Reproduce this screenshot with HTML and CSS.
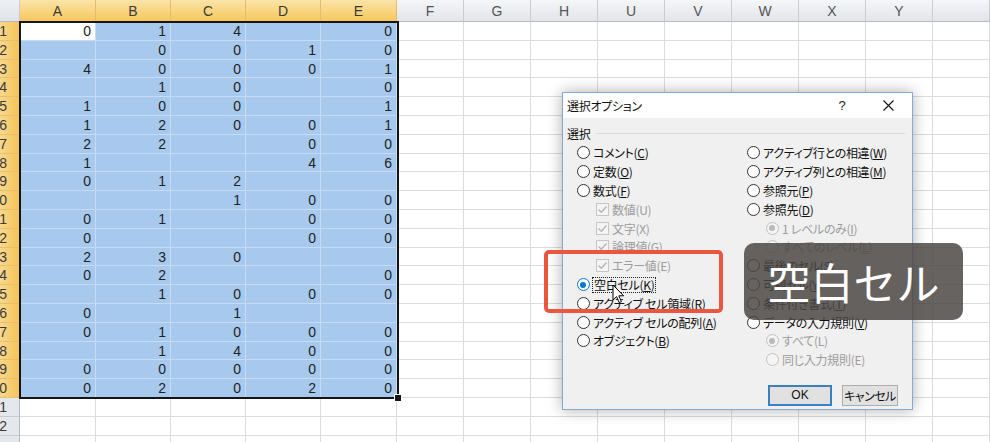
FILE: index.html
```html
<!DOCTYPE html>
<html lang="ja">
<head>
<meta charset="utf-8">
<title>選択オプション</title>
<link rel="stylesheet" href="styles.css">
</head>
<body>
<div class="sheet">
  <div class="row hdr"><div class="corner"></div><div class="sel">A</div><div class="sel">B</div><div class="sel">C</div><div class="sel">D</div><div class="sel">E</div><div>F</div><div>G</div><div>H</div><div>U</div><div>V</div><div>W</div><div>X</div><div>Y</div><div></div></div>
  <div class="row"><div class="rh sel"><span>1</span></div><div class="c act">0</div><div class="c s">1</div><div class="c s">4</div><div class="c s"></div><div class="c s">0</div><div class="c"></div><div class="c"></div><div class="c"></div><div class="c"></div><div class="c"></div><div class="c"></div><div class="c"></div><div class="c"></div><div class="c"></div></div>
  <div class="row"><div class="rh sel"><span>2</span></div><div class="c s"></div><div class="c s">0</div><div class="c s">0</div><div class="c s">1</div><div class="c s">0</div><div class="c"></div><div class="c"></div><div class="c"></div><div class="c"></div><div class="c"></div><div class="c"></div><div class="c"></div><div class="c"></div><div class="c"></div></div>
  <div class="row"><div class="rh sel"><span>3</span></div><div class="c s">4</div><div class="c s">0</div><div class="c s">0</div><div class="c s">0</div><div class="c s">1</div><div class="c"></div><div class="c"></div><div class="c"></div><div class="c"></div><div class="c"></div><div class="c"></div><div class="c"></div><div class="c"></div><div class="c"></div></div>
  <div class="row"><div class="rh sel"><span>4</span></div><div class="c s"></div><div class="c s">1</div><div class="c s">0</div><div class="c s"></div><div class="c s">0</div><div class="c"></div><div class="c"></div><div class="c"></div><div class="c"></div><div class="c"></div><div class="c"></div><div class="c"></div><div class="c"></div><div class="c"></div></div>
  <div class="row"><div class="rh sel"><span>5</span></div><div class="c s">1</div><div class="c s">0</div><div class="c s">0</div><div class="c s"></div><div class="c s">1</div><div class="c"></div><div class="c"></div><div class="c"></div><div class="c"></div><div class="c"></div><div class="c"></div><div class="c"></div><div class="c"></div><div class="c"></div></div>
  <div class="row"><div class="rh sel"><span>6</span></div><div class="c s">1</div><div class="c s">2</div><div class="c s">0</div><div class="c s">0</div><div class="c s">1</div><div class="c"></div><div class="c"></div><div class="c"></div><div class="c"></div><div class="c"></div><div class="c"></div><div class="c"></div><div class="c"></div><div class="c"></div></div>
  <div class="row"><div class="rh sel"><span>7</span></div><div class="c s">2</div><div class="c s">2</div><div class="c s"></div><div class="c s">0</div><div class="c s">0</div><div class="c"></div><div class="c"></div><div class="c"></div><div class="c"></div><div class="c"></div><div class="c"></div><div class="c"></div><div class="c"></div><div class="c"></div></div>
  <div class="row"><div class="rh sel"><span>8</span></div><div class="c s">1</div><div class="c s"></div><div class="c s"></div><div class="c s">4</div><div class="c s">6</div><div class="c"></div><div class="c"></div><div class="c"></div><div class="c"></div><div class="c"></div><div class="c"></div><div class="c"></div><div class="c"></div><div class="c"></div></div>
  <div class="row"><div class="rh sel"><span>9</span></div><div class="c s">0</div><div class="c s">1</div><div class="c s">2</div><div class="c s"></div><div class="c s"></div><div class="c"></div><div class="c"></div><div class="c"></div><div class="c"></div><div class="c"></div><div class="c"></div><div class="c"></div><div class="c"></div><div class="c"></div></div>
  <div class="row"><div class="rh sel"><span>10</span></div><div class="c s"></div><div class="c s"></div><div class="c s">1</div><div class="c s">0</div><div class="c s">0</div><div class="c"></div><div class="c"></div><div class="c"></div><div class="c"></div><div class="c"></div><div class="c"></div><div class="c"></div><div class="c"></div><div class="c"></div></div>
  <div class="row"><div class="rh sel"><span>11</span></div><div class="c s">0</div><div class="c s">1</div><div class="c s"></div><div class="c s">0</div><div class="c s">0</div><div class="c"></div><div class="c"></div><div class="c"></div><div class="c"></div><div class="c"></div><div class="c"></div><div class="c"></div><div class="c"></div><div class="c"></div></div>
  <div class="row"><div class="rh sel"><span>12</span></div><div class="c s">0</div><div class="c s"></div><div class="c s"></div><div class="c s">0</div><div class="c s">0</div><div class="c"></div><div class="c"></div><div class="c"></div><div class="c"></div><div class="c"></div><div class="c"></div><div class="c"></div><div class="c"></div><div class="c"></div></div>
  <div class="row"><div class="rh sel"><span>13</span></div><div class="c s">2</div><div class="c s">3</div><div class="c s">0</div><div class="c s"></div><div class="c s"></div><div class="c"></div><div class="c"></div><div class="c"></div><div class="c"></div><div class="c"></div><div class="c"></div><div class="c"></div><div class="c"></div><div class="c"></div></div>
  <div class="row"><div class="rh sel"><span>14</span></div><div class="c s">0</div><div class="c s">2</div><div class="c s"></div><div class="c s"></div><div class="c s">0</div><div class="c"></div><div class="c"></div><div class="c"></div><div class="c"></div><div class="c"></div><div class="c"></div><div class="c"></div><div class="c"></div><div class="c"></div></div>
  <div class="row"><div class="rh sel"><span>15</span></div><div class="c s"></div><div class="c s">1</div><div class="c s">0</div><div class="c s">0</div><div class="c s">0</div><div class="c"></div><div class="c"></div><div class="c"></div><div class="c"></div><div class="c"></div><div class="c"></div><div class="c"></div><div class="c"></div><div class="c"></div></div>
  <div class="row"><div class="rh sel"><span>16</span></div><div class="c s">0</div><div class="c s"></div><div class="c s">1</div><div class="c s"></div><div class="c s"></div><div class="c"></div><div class="c"></div><div class="c"></div><div class="c"></div><div class="c"></div><div class="c"></div><div class="c"></div><div class="c"></div><div class="c"></div></div>
  <div class="row"><div class="rh sel"><span>17</span></div><div class="c s">0</div><div class="c s">1</div><div class="c s">0</div><div class="c s">0</div><div class="c s">0</div><div class="c"></div><div class="c"></div><div class="c"></div><div class="c"></div><div class="c"></div><div class="c"></div><div class="c"></div><div class="c"></div><div class="c"></div></div>
  <div class="row"><div class="rh sel"><span>18</span></div><div class="c s"></div><div class="c s">1</div><div class="c s">4</div><div class="c s">0</div><div class="c s">0</div><div class="c"></div><div class="c"></div><div class="c"></div><div class="c"></div><div class="c"></div><div class="c"></div><div class="c"></div><div class="c"></div><div class="c"></div></div>
  <div class="row"><div class="rh sel"><span>19</span></div><div class="c s">0</div><div class="c s">0</div><div class="c s">0</div><div class="c s">0</div><div class="c s">0</div><div class="c"></div><div class="c"></div><div class="c"></div><div class="c"></div><div class="c"></div><div class="c"></div><div class="c"></div><div class="c"></div><div class="c"></div></div>
  <div class="row"><div class="rh sel"><span>20</span></div><div class="c s">0</div><div class="c s">2</div><div class="c s">0</div><div class="c s">2</div><div class="c s">0</div><div class="c"></div><div class="c"></div><div class="c"></div><div class="c"></div><div class="c"></div><div class="c"></div><div class="c"></div><div class="c"></div><div class="c"></div></div>
  <div class="row"><div class="rh"><span>21</span></div><div class="c"></div><div class="c"></div><div class="c"></div><div class="c"></div><div class="c"></div><div class="c"></div><div class="c"></div><div class="c"></div><div class="c"></div><div class="c"></div><div class="c"></div><div class="c"></div><div class="c"></div><div class="c"></div></div>
  <div class="row"><div class="rh"><span>22</span></div><div class="c"></div><div class="c"></div><div class="c"></div><div class="c"></div><div class="c"></div><div class="c"></div><div class="c"></div><div class="c"></div><div class="c"></div><div class="c"></div><div class="c"></div><div class="c"></div><div class="c"></div><div class="c"></div></div>
  <div class="row"><div class="rh"></div><div class="c"></div><div class="c"></div><div class="c"></div><div class="c"></div><div class="c"></div><div class="c"></div><div class="c"></div><div class="c"></div><div class="c"></div><div class="c"></div><div class="c"></div><div class="c"></div><div class="c"></div><div class="c"></div></div>
  <div class="frame"><span class="handle"></span></div>
</div>

<div class="dialog">
  <div class="titlebar">
    <span class="title">選択オプション</span>
    <span class="tbtn help">?</span>
    <span class="tbtn close"><svg width="11" height="11" viewBox="0 0 11 11"><path d="M0.5 0.5 L10.5 10.5 M10.5 0.5 L0.5 10.5" stroke="#111" stroke-width="1.1" fill="none"/></svg></span>
  </div>
  <div class="body">
    <div class="group"><span>選択</span><span class="rule"></span></div>
    <div class="cols">
      <div class="col left">
        <div class="opt"><span class="radio"></span>コメント(<u>C</u>)</div>
        <div class="opt"><span class="radio"></span>定数(<u>O</u>)</div>
        <div class="opt"><span class="radio"></span>数式(<u>F</u>)</div>
        <div class="opt ind dis"><span class="check"><svg width="11" height="11" viewBox="0 0 11 11"><path d="M1.5 5.5 L4.3 8.3 L9.5 2.5" stroke="#b4b4b4" stroke-width="1.3" fill="none"/></svg></span>数値(U)</div>
        <div class="opt ind dis"><span class="check"><svg width="11" height="11" viewBox="0 0 11 11"><path d="M1.5 5.5 L4.3 8.3 L9.5 2.5" stroke="#b4b4b4" stroke-width="1.3" fill="none"/></svg></span>文字(X)</div>
        <div class="opt ind dis"><span class="check"><svg width="11" height="11" viewBox="0 0 11 11"><path d="M1.5 5.5 L4.3 8.3 L9.5 2.5" stroke="#b4b4b4" stroke-width="1.3" fill="none"/></svg></span>論理値(G)</div>
        <div class="opt ind dis"><span class="check"><svg width="11" height="11" viewBox="0 0 11 11"><path d="M1.5 5.5 L4.3 8.3 L9.5 2.5" stroke="#b4b4b4" stroke-width="1.3" fill="none"/></svg></span>エラー値(E)</div>
        <div class="opt"><span class="radio on"></span><span class="focus">空白セル(<u>K</u>)</span></div>
        <div class="opt"><span class="radio"></span>アクティブ セル領域(<u>R</u>)</div>
        <div class="opt"><span class="radio"></span>アクティブ セルの配列(<u>A</u>)</div>
        <div class="opt"><span class="radio"></span>オブジェクト(<u>B</u>)</div>
      </div>
      <div class="col right">
        <div class="opt"><span class="radio"></span>アクティブ行との相違(<u>W</u>)</div>
        <div class="opt"><span class="radio"></span>アクティブ列との相違(<u>M</u>)</div>
        <div class="opt"><span class="radio"></span>参照元(<u>P</u>)</div>
        <div class="opt"><span class="radio"></span>参照先(<u>D</u>)</div>
        <div class="opt ind dis"><span class="radio dison"></span>1 レベルのみ(<u>I</u>)</div>
        <div class="opt ind dis"><span class="radio"></span>すべてのレベル(<u>L</u>)</div>
        <div class="opt"><span class="radio"></span>最後のセル(<u>S</u>)</div>
        <div class="opt"><span class="radio"></span>可視セル(<u>Y</u>)</div>
        <div class="opt"><span class="radio"></span>条件付き書式(<u>T</u>)</div>
        <div class="opt"><span class="radio"></span>データの入力規則(<u>V</u>)</div>
        <div class="opt ind dis"><span class="radio dison"></span>すべて(L)</div>
        <div class="opt ind dis"><span class="radio"></span>同じ入力規則(E)</div>
      </div>
    </div>
    <div class="buttons">
      <button class="btn def">OK</button>
      <button class="btn">キャンセル</button>
    </div>
  </div>
</div>

<div class="highlight"></div>
<div class="caption">空白セル</div>
<svg class="cursor" width="13" height="20" viewBox="0 0 13 20"><path d="M1 1 L1 16 L4.6 12.6 L7.2 18.6 L9.4 17.6 L6.8 11.8 L11.6 11.8 Z" fill="#fff" stroke="#000" stroke-width="1" stroke-linejoin="round"/></svg>
</body>
</html>
```

FILE: styles.css
```css
html, body {
  margin: 0;
  padding: 0;
}
body {
  width: 990px;
  height: 442px;
  overflow: hidden;
  position: relative;
  background: #fff;
  font-family: "Liberation Sans", Arial, sans-serif;
}

/* ---------- spreadsheet ---------- */
.sheet {
  position: relative;
}
.row {
  display: grid;
  grid-template-columns: 20px 76px 75px 75px 75px 76px 67px 67px 67px 67px 67px 67px 67px 67px 57px;
  height: 18.8px;
}
.row > div {
  box-sizing: border-box;
  overflow: hidden;
  white-space: nowrap;
}
.hdr {
  height: 22px;
}
.hdr > div {
  background: linear-gradient(#f5f6f8, #e1e4e9);
  border-right: 1px solid #c8ccd2;
  border-bottom: 1px solid #b6bac0;
  color: #555;
  font-size: 14px;
  line-height: 22px;
  text-align: center;
}
.hdr > .sel {
  background: linear-gradient(#fbe4a8, #f6c75c);
  border-right-color: #e5bd6a;
  border-bottom-color: #d49a32;
  color: #3a3a3a;
}
.hdr > .corner {
  background: linear-gradient(#eef0f3, #dfe2e7);
}
.rh {
  display: flex;
  justify-content: flex-end;
  background: #e4e7ec;
  border-right: 1px solid #b6bac0;
  border-bottom: 1px solid #c8ccd2;
  color: #3a3a3a;
  font-size: 14px;
  line-height: 18.8px;
  padding-right: 12px;
}
.rh span {
  flex: none;
}
.rh.sel {
  background: linear-gradient(90deg, #f9d88e, #f4c359);
  border-right-color: #d49a32;
  border-bottom-color: #e8c06c;
}
.c {
  border-right: 1px solid #dadcdd;
  border-bottom: 1px solid #dadcdd;
  font-size: 14px;
  line-height: 18px;
  text-align: right;
  padding-right: 4px;
  color: #222;
}
.c.s {
  background: #a7c9ee;
  border-right-color: #c7dcf4;
  border-bottom-color: #c7dcf4;
}
.c.act {
  background: #fff;
  border-right-color: #c7dcf4;
  border-bottom-color: #c7dcf4;
}
.frame {
  position: absolute;
  left: 19px;
  top: 21px;
  width: 380px;
  height: 378px;
  box-sizing: border-box;
  border: 2px solid #151515;
  pointer-events: none;
}
.handle {
  position: absolute;
  right: -5px;
  bottom: -5px;
  width: 6px;
  height: 6px;
  background: #151515;
  border: 1px solid #fff;
}

/* ---------- dialog ---------- */
.dialog {
  position: absolute;
  left: 562px;
  top: 92px;
  width: 351px;
  height: 318px;
  box-sizing: border-box;
  border: 1px solid #86a8d4;
  background: #f0f0f0;
  box-shadow: 0 0 14px rgba(0, 0, 0, 0.32);
  font-family: "Noto Sans CJK JP", "Noto Sans", sans-serif;
  font-size: 12px;
  font-feature-settings: "palt";
  letter-spacing: -0.3px;
  color: #111;
}
.titlebar {
  height: 25px;
  background: #fff;
  display: flex;
  align-items: center;
  padding-left: 4px;
}
.title {
  flex: 1;
}
.tbtn {
  width: 46px;
  height: 25px;
  display: flex;
  align-items: center;
  justify-content: center;
}
.help {
  font-family: "Liberation Sans", Arial, sans-serif;
  font-size: 13px;
  color: #222;
}
.close {
  margin-right: 1px;
}
.body {
  padding: 0 7px 0 4px;
}
.group {
  display: flex;
  align-items: center;
  height: 20px;
  margin-top: 5px;
}
.rule {
  flex: 1;
  height: 1px;
  background: #d9d9d9;
  margin-left: 6px;
}
.cols {
  display: flex;
  margin-top: 0.6px;
}
.col {
  display: flex;
  flex-direction: column;
  padding-left: 9.5px;
}
.col.left {
  width: 170px;
  box-sizing: border-box;
}
.opt {
  display: flex;
  align-items: center;
  height: 18.8px;
  white-space: nowrap;
}
.opt.ind {
  padding-left: 19px;
}
.opt.dis {
  color: #9c9c9c;
}
.opt u {
  text-underline-offset: 1px;
}
.radio {
  width: 13px;
  height: 13px;
  box-sizing: border-box;
  border: 1px solid #333;
  border-radius: 50%;
  background: #fff;
  margin-right: 3.5px;
  flex: none;
  position: relative;
}
.radio.on {
  border-color: #0078d7;
}
.radio.on::after,
.radio.dison::after {
  content: "";
  position: absolute;
  left: 2.5px;
  top: 2.5px;
  width: 6px;
  height: 6px;
  border-radius: 50%;
  background: #0078d7;
}
.dis .radio {
  border-color: #c2c2c2;
  background: #f4f4f4;
}
.radio.dison::after {
  background: #b9b9b9;
}
.check {
  width: 13px;
  height: 13px;
  box-sizing: border-box;
  border: 1px solid #c6c6c6;
  background: #f4f4f4;
  margin-right: 3.5px;
  flex: none;
  display: flex;
  align-items: center;
  justify-content: center;
}
.check svg {
  display: block;
}
.focus {
  outline: 1px dotted #222;
  outline-offset: 0;
  padding: 0 1px;
  line-height: 14px;
}
.buttons {
  display: flex;
  justify-content: flex-end;
  gap: 10px;
  margin-top: 15.8px;
  margin-right: 7px;
}
.btn {
  height: 21px;
  box-sizing: border-box;
  border: 1px solid #adadad;
  background: #e1e1e1;
  font-family: "Noto Sans CJK JP", "Noto Sans", sans-serif;
  font-size: 12px;
  font-feature-settings: "palt";
  letter-spacing: -0.5px;
  white-space: nowrap;
  color: #111;
  padding: 0;
  width: 56px;
}
.btn.def {
  width: 64px;
  border: 2px solid #3c7fc0;
  font-family: "Liberation Sans", Arial, sans-serif;
  letter-spacing: 0;
}

/* ---------- overlays ---------- */
.highlight {
  position: absolute;
  left: 544px;
  top: 250px;
  width: 179px;
  height: 63px;
  box-sizing: border-box;
  border: 4px solid #ea5640;
  border-radius: 5px;
}
.caption {
  position: absolute;
  left: 744px;
  top: 243px;
  width: 219px;
  height: 77px;
  border-radius: 10px;
  background: rgba(74, 69, 65, 0.84);
  color: #fff;
  font-family: "Noto Sans CJK JP", sans-serif;
  font-size: 43px;
  line-height: 77px;
  text-align: center;
}
.cursor {
  position: absolute;
  left: 612px;
  top: 284px;
}
```
